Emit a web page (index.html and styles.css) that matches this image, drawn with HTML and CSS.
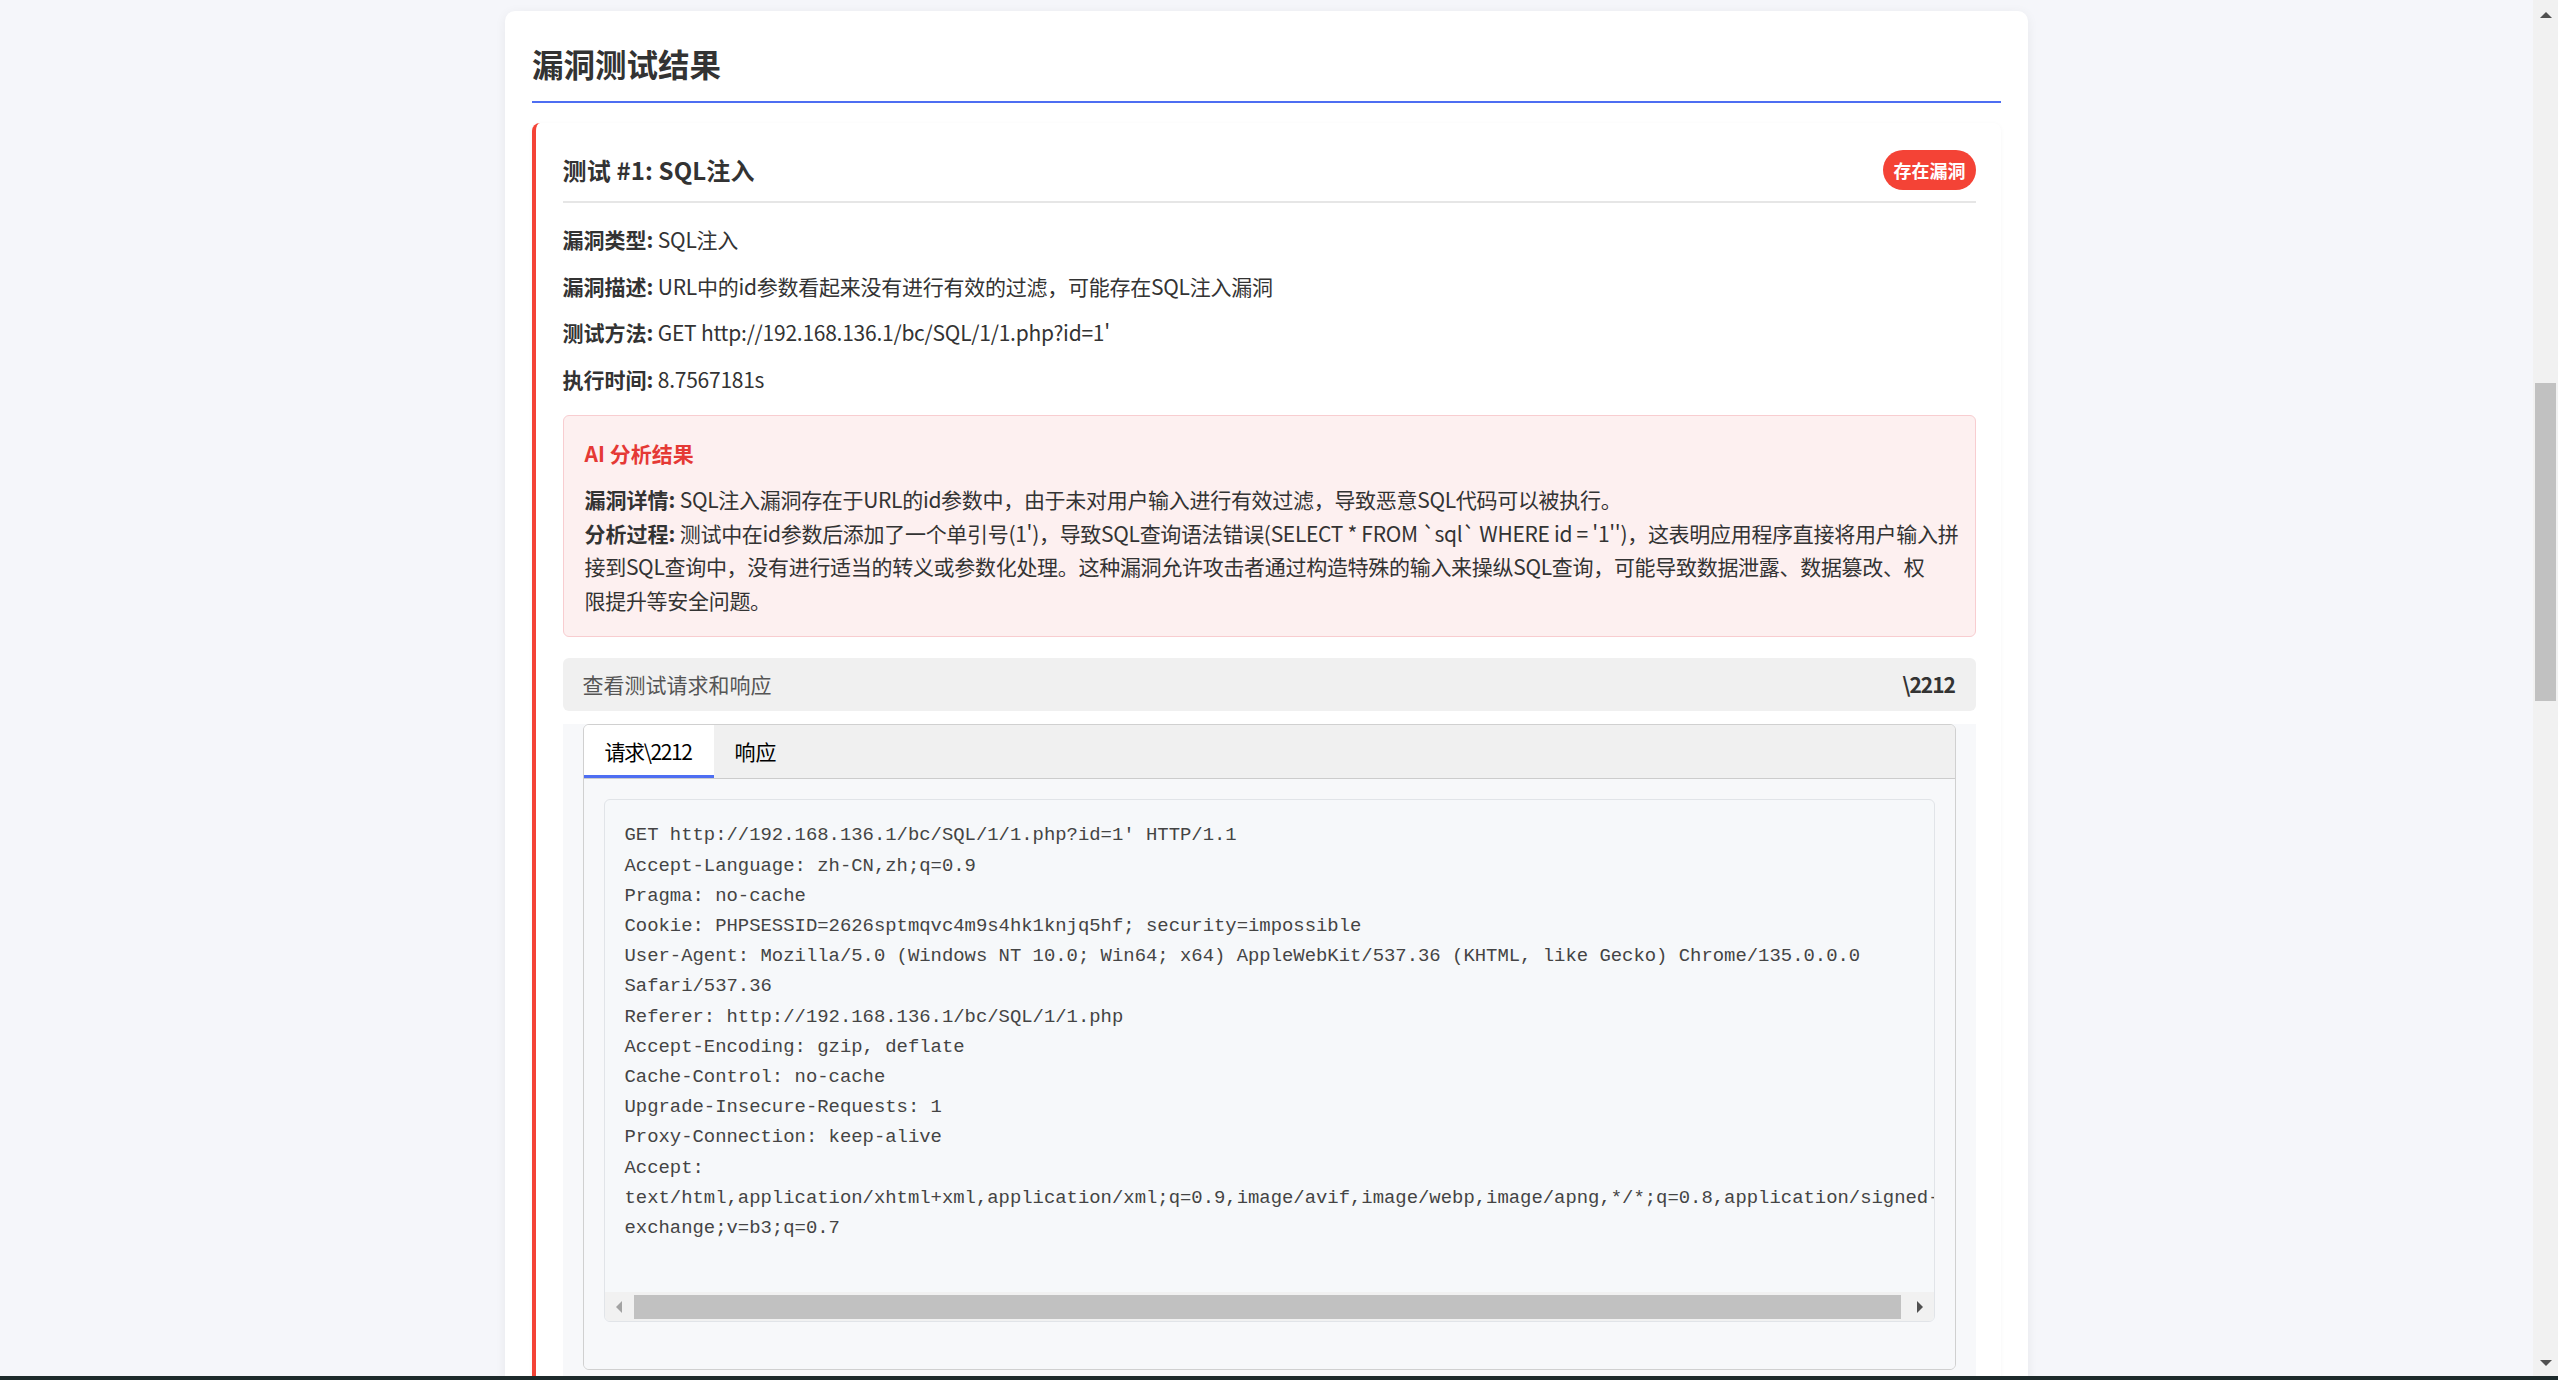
FILE: index.html
```html
<!DOCTYPE html>
<html lang="zh-CN">
<head>
<meta charset="utf-8">
<title>漏洞测试结果</title>
<link rel="stylesheet" href="styles.css">
</head>
<body>
<div class="screen">
  <div class="viewport">
    <section class="card">
      <h2 class="card-title">漏洞测试结果</h2>
      <article class="test">
        <header class="test-head">
          <h3 class="test-title">测试 #1: SQL注入</h3>
          <span class="badge">存在漏洞</span>
        </header>
        <p class="row"><strong>漏洞类型:</strong> SQL注入</p>
        <p class="row"><strong>漏洞描述:</strong> URL中的id参数看起来没有进行有效的过滤，可能存在SQL注入漏洞</p>
        <p class="row"><strong>测试方法:</strong> GET http://192.168.136.1/bc/SQL/1/1.php?id=1'</p>
        <p class="row"><strong>执行时间:</strong> 8.7567181s</p>
        <div class="ai">
          <h4 class="ai-title">AI 分析结果</h4>
          <p class="ai-text"><strong>漏洞详情:</strong> SQL注入漏洞存在于URL的id参数中，由于未对用户输入进行有效过滤，导致恶意SQL代码可以被执行。</p>
          <p class="ai-text"><strong>分析过程:</strong> 测试中在id参数后添加了一个单引号(1')，导致SQL查询语法错误(SELECT * FROM `sql` WHERE id = '1'')，这表明应用程序直接将用户输入拼<br>接到SQL查询中，没有进行适当的转义或参数化处理。这种漏洞允许攻击者通过构造特殊的输入来操纵SQL查询，可能导致数据泄露、数据篡改、权<br>限提升等安全问题。</p>
        </div>
        <div class="toggle"><span>查看测试请求和响应</span><span class="toggle-icon">\2212</span></div>
        <div class="details">
          <div class="tabs">
            <div class="tab-bar"><span class="tab active">请求\2212</span><span class="tab">响应</span></div>
            <div class="tab-body">
              <div class="code-box">
<pre class="code">GET http://192.168.136.1/bc/SQL/1/1.php?id=1' HTTP/1.1
Accept-Language: zh-CN,zh;q=0.9
Pragma: no-cache
Cookie: PHPSESSID=2626sptmqvc4m9s4hk1knjq5hf; security=impossible
User-Agent: Mozilla/5.0 (Windows NT 10.0; Win64; x64) AppleWebKit/537.36 (KHTML, like Gecko) Chrome/135.0.0.0
Safari/537.36
Referer: http://192.168.136.1/bc/SQL/1/1.php
Accept-Encoding: gzip, deflate
Cache-Control: no-cache
Upgrade-Insecure-Requests: 1
Proxy-Connection: keep-alive
Accept:
text/html,application/xhtml+xml,application/xml;q=0.9,image/avif,image/webp,image/apng,*/*;q=0.8,application/signed-
exchange;v=b3;q=0.7</pre>
                <div class="hscroll">
                  <span class="hbtn"><svg width="8" height="12" viewBox="0 0 8 12"><polygon points="7,0 7,12 1,6" fill="#a3a3a3"/></svg></span>
                  <span class="hthumb"></span>
                  <span class="hbtn"><svg width="8" height="12" viewBox="0 0 8 12"><polygon points="1,0 1,12 7,6" fill="#505050"/></svg></span>
                </div>
              </div>
            </div>
          </div>
        </div>
      </article>
    </section>
  </div>
  <div class="vscroll">
    <span class="vbtn"><svg width="12" height="8" viewBox="0 0 12 8"><polygon points="0,7 12,7 6,1" fill="#505050"/></svg></span>
    <span class="vthumb"></span>
    <span class="vbtn down"><svg width="12" height="8" viewBox="0 0 12 8"><polygon points="0,1 12,1 6,7" fill="#505050"/></svg></span>
  </div>
</div>
<div class="taskbar"></div>
</body>
</html>
```

FILE: styles.css
```css
* { box-sizing: border-box; }
html, body { margin: 0; padding: 0; }
body {
  width: 2558px;
  height: 1380px;
  overflow: hidden;
  display: flex;
  flex-direction: column;
  background: #f5f6fa;
  font-family: "Noto Sans CJK SC", "Noto Sans", sans-serif;
  color: #333;
}
.screen { flex: 1; display: flex; min-height: 0; }
.viewport { flex: 1; min-width: 0; overflow: hidden; padding-top: 11px; }
.taskbar { height: 4px; background: #1d2a2b; }

.vscroll {
  width: 25px;
  background: #f1f1f1;
  display: flex;
  flex-direction: column;
  align-items: center;
}
.vbtn { height: 30px; width: 25px; display: flex; align-items: center; justify-content: center; }
.vbtn.down { margin-top: auto; height: 26px; }
.vthumb { width: 21px; height: 318px; margin-top: 353px; background: #c1c1c1; }

.card {
  width: 1523px;
  margin: 0 auto;
  background: #fff;
  border-radius: 10px;
  box-shadow: 0 2px 12px rgba(0, 0, 0, 0.06);
  padding: 27px 27px 0;
}
.card-title {
  margin: 0 0 20px;
  font-size: 31.5px;
  line-height: 50px;
  font-weight: 700;
  padding-bottom: 13px;
  border-bottom: 2px solid #4e6ef2;
}
.test {
  background: #fff;
  border-left: 4.5px solid #f44336;
  border-radius: 8px 8px 0 0;
  padding: 27px 25px 0 26.5px;
  box-shadow: 0 1px 5px rgba(0, 0, 0, 0.04);
}
.test-head {
  display: flex;
  justify-content: space-between;
  align-items: center;
  padding-bottom: 11px;
  border-bottom: 2px solid #e6e6e6;
  margin-bottom: 21px;
}
.test-title { margin: 0; font-size: 24px; line-height: 40px; font-weight: 700; letter-spacing: 0.15px; }
.badge {
  background: #f44336;
  color: #fff;
  font-size: 18px;
  line-height: 24px;
  font-weight: 700;
  padding: 8px 10.5px;
  border-radius: 20px;
}
.row { margin: 0 0 15px; font-size: 21px; line-height: 31.5px; letter-spacing: -0.25px; }
.row strong { letter-spacing: 0; }

.ai {
  margin-top: 20px;
  background: #fdf0f0;
  border: 1px solid #f8cdd0;
  border-radius: 6px;
  padding: 20px 21px 19px;
}
.ai-title { margin: 0 0 13px; color: #e53935; font-size: 21px; line-height: 34px; font-weight: 700; }
.ai-text { margin: 0; font-size: 21px; line-height: 33.6px; letter-spacing: -0.3px; white-space: nowrap; }
.ai-text strong { letter-spacing: 0; }

.toggle {
  margin-top: 21px;
  display: flex;
  justify-content: space-between;
  align-items: center;
  background: #f0f0f0;
  border-radius: 6px;
  padding: 11px 21px 11px 20px;
  font-size: 21px;
  line-height: 31px;
  color: #555;
}
.toggle-icon { font-weight: 700; color: #333; letter-spacing: -1px; }

.details { margin-top: 13px; background: #f7f8fa; padding: 0 20px 20px; }
.tabs { border: 1px solid #d0d0d0; border-radius: 6px; overflow: hidden; }
.tab-bar { display: flex; background: #f0f0f0; border-bottom: 1px solid #cccccc; }
.tab {
  padding: 2px 21px 0;
  font-size: 21px;
  line-height: 48px;
  border-bottom: 3px solid transparent;
  color: #000;
}
.tab.active { background: #fff; border-bottom-color: #4e6ef2; letter-spacing: -1.4px; padding-right: 22px; }
.tab-body { background: #f7f8fa; padding: 20px 20px 47px; }
.code-box {
  border: 1px solid #e1e4e8;
  border-radius: 6px;
  background: #f6f8fa;
  overflow: hidden;
}
.code {
  margin: 0;
  padding: 20px 20px 49px;
  font-family: "Liberation Mono", "Courier New", monospace;
  font-size: 18.9px;
  line-height: 30.2px;
  color: #444;
  white-space: pre;
  overflow: hidden;
}
.hscroll { height: 29px; display: flex; align-items: center; background: #f1f1f1; }
.hbtn { width: 28px; height: 29px; display: flex; align-items: center; justify-content: center; }
.hthumb { flex: 1; height: 24px; margin: 0 5px 0 1px; background: #c1c1c1; }
```
